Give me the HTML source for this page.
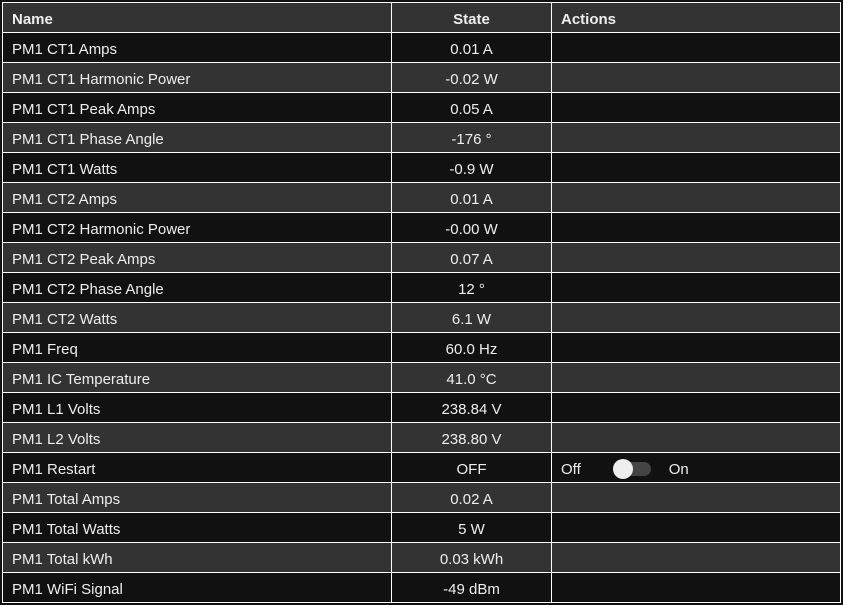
<!DOCTYPE html>
<html><head><style>
html,body{margin:0;padding:0;background:#111;width:843px;height:605px;overflow:hidden}
table{position:absolute;left:2px;top:2px;border-collapse:collapse;font-family:"Liberation Sans",sans-serif;font-size:15px;color:#eee}
td,th{border:1px solid #fff;height:26px;padding:3px 0 0 9px;text-align:left;white-space:nowrap}
th{font-weight:bold;background:#333}
tr:nth-child(even) td{background:#111}
tr:nth-child(odd) td{background:#333}
td.s,th.s{text-align:center;padding-left:0}
.c1{width:379px}.c2{width:159px}.c3{width:279px}
.tg{display:inline-block;position:relative;width:36px;height:14px;background:#444;border-radius:7px;vertical-align:-2px;margin:0 18px 0 34px}
.tg:before{content:"";position:absolute;left:-2px;top:-3px;width:20px;height:20px;border-radius:50%;background:#eee}
</style></head><body>
<table>
<tr><th class="c1">Name</th><th class="s c2">State</th><th class="c3">Actions</th></tr>
<tr><td>PM1 CT1 Amps</td><td class="s">0.01 A</td><td></td></tr>
<tr><td>PM1 CT1 Harmonic Power</td><td class="s">-0.02 W</td><td></td></tr>
<tr><td>PM1 CT1 Peak Amps</td><td class="s">0.05 A</td><td></td></tr>
<tr><td>PM1 CT1 Phase Angle</td><td class="s">-176 °</td><td></td></tr>
<tr><td>PM1 CT1 Watts</td><td class="s">-0.9 W</td><td></td></tr>
<tr><td>PM1 CT2 Amps</td><td class="s">0.01 A</td><td></td></tr>
<tr><td>PM1 CT2 Harmonic Power</td><td class="s">-0.00 W</td><td></td></tr>
<tr><td>PM1 CT2 Peak Amps</td><td class="s">0.07 A</td><td></td></tr>
<tr><td>PM1 CT2 Phase Angle</td><td class="s">12 °</td><td></td></tr>
<tr><td>PM1 CT2 Watts</td><td class="s">6.1 W</td><td></td></tr>
<tr><td>PM1 Freq</td><td class="s">60.0 Hz</td><td></td></tr>
<tr><td>PM1 IC Temperature</td><td class="s">41.0 °C</td><td></td></tr>
<tr><td>PM1 L1 Volts</td><td class="s">238.84 V</td><td></td></tr>
<tr><td>PM1 L2 Volts</td><td class="s">238.80 V</td><td></td></tr>
<tr><td>PM1 Restart</td><td class="s">OFF</td><td>Off<span class="tg"></span>On</td></tr>
<tr><td>PM1 Total Amps</td><td class="s">0.02 A</td><td></td></tr>
<tr><td>PM1 Total Watts</td><td class="s">5 W</td><td></td></tr>
<tr><td>PM1 Total kWh</td><td class="s">0.03 kWh</td><td></td></tr>
<tr><td>PM1 WiFi Signal</td><td class="s">-49 dBm</td><td></td></tr>
</table>
</body></html>
